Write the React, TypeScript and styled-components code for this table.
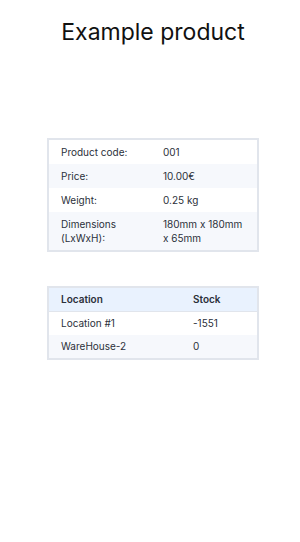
import React from 'react';
import styled, { createGlobalStyle } from 'styled-components';

const GlobalStyle = createGlobalStyle`
  html, body {
    margin: 0;
    padding: 0;
    background: #ffffff;
    font-family: Inter, "Noto Sans", sans-serif;
    color: #1d2330;
  }
`;

const Page = styled.div`
  width: 300px;
  min-height: 542px;
  display: flex;
  flex-direction: column;
  align-items: center;
  padding-left: 6px;
  box-sizing: border-box;
`;

const Title = styled.h1`
  margin: 17px 0 0;
  font-size: 23px;
  font-weight: 400;
  line-height: 30px;
  color: #111;
`;

const Table = styled.table<{ $top: number; $dense?: boolean }>`
  width: 212px;
  margin-top: ${p => p.$top}px;
  border-collapse: collapse;
  border: 2px solid #e1e5ec;
  font-size: 10px;
  color: #2b303a;

  td, th {
    padding: ${p => (p.$dense ? '4px 12px 5px' : '5px 12px')};
  }
`;

const Row = styled.tr<{ $striped?: boolean }>`
  background: ${p => (p.$striped ? '#f6f8fc' : '#ffffff')};
  & + & td {
    border-top: 1px solid #e1e5ec;
  }
`;

const HeadRow = styled.tr`
  background: #e9f2fe;
`;

const Cell = styled.td<{ $width?: number }>`
  line-height: 14px;
  vertical-align: top;
  text-align: left;
  width: ${p => (p.$width ? `${p.$width}px` : 'auto')};
`;

const HeadCell = styled.th<{ $width?: number }>`
  line-height: 14px;
  font-weight: 600;
  text-align: left;
  width: ${p => (p.$width ? `${p.$width}px` : 'auto')};
  border-bottom: 1px solid #e1e5ec;
`;

const details = [
  { label: 'Product code:', value: '001' },
  { label: 'Price:', value: '10.00€' },
  { label: 'Weight:', value: '0.25 kg' },
  { label: 'Dimensions (LxWxH):', value: '180mm x 180mm x 65mm' },
];

const stock = [
  { location: 'Location #1', amount: '-1551' },
  { location: 'WareHouse-2', amount: '0' },
];

const App = () => {
  return (
    <>
      <GlobalStyle />
      <Page>
        <Title>Example product</Title>

        <Table $top={91}>
          <tbody>
            {details.map((d, i) => (
              <Row key={d.label} $striped={i % 2 === 1}>
                <Cell $width={78}>{d.label}</Cell>
                <Cell>{d.value}</Cell>
              </Row>
            ))}
          </tbody>
        </Table>

        <Table $top={34} $dense>
          <thead>
            <HeadRow>
              <HeadCell $width={108}>Location</HeadCell>
              <HeadCell>Stock</HeadCell>
            </HeadRow>
          </thead>
          <tbody>
            {stock.map((s, i) => (
              <Row key={s.location} $striped={i % 2 === 1}>
                <Cell>{s.location}</Cell>
                <Cell>{s.amount}</Cell>
              </Row>
            ))}
          </tbody>
        </Table>
      </Page>
    </>
  );
};

export default App;
